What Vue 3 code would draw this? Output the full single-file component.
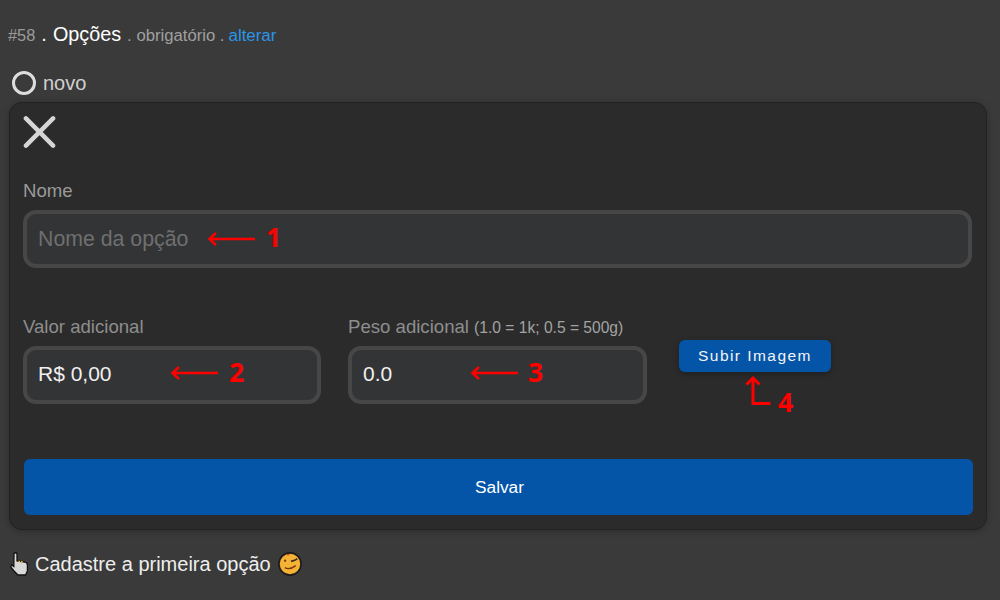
<script setup>
const arrowColor = '#f00'
</script>

<template>
  <div class="page">
    <div class="head">
      <span class="num">#58</span>
      <span class="dot-w">.</span>
      <span class="title">Opções</span>
      <span class="meta">. obrigatório .</span>
      <a class="link">alterar</a>
    </div>

    <div class="radio-row">
      <span class="radio"></span>
      <span class="radio-label">novo</span>
    </div>

    <div class="card">
      <svg class="close" width="33" height="34" viewBox="0 0 34 34">
        <path d="M3 3 L31 31 M31 3 L3 31" stroke="#d6d6d6" stroke-width="4.6" stroke-linecap="round" fill="none" />
      </svg>

      <label class="lbl lbl-nome">Nome</label>
      <div class="field field-full">
        <span class="placeholder">Nome da opção</span>
        <svg class="arrow a1" width="50" height="16" viewBox="0 0 50 16">
          <path d="M48 8 H3 M9 2 L2.5 8 L9 14" :stroke="arrowColor" stroke-width="2.5" fill="none" />
        </svg>
        <span class="mark m1">1</span>
      </div>

      <div class="row">
        <div class="col">
          <label class="lbl">Valor adicional</label>
          <div class="field field-value">
            <span class="value">R$ 0,00</span>
            <svg class="arrow a2" width="50" height="16" viewBox="0 0 50 16">
              <path d="M48 8 H3 M9 2 L2.5 8 L9 14" :stroke="arrowColor" stroke-width="2.5" fill="none" />
            </svg>
            <span class="mark m2">2</span>
          </div>
        </div>
        <div class="col col-wide">
          <label class="lbl">Peso adicional <small>(1.0 = 1k; 0.5 = 500g)</small></label>
          <div class="field field-value">
            <span class="value">0.0</span>
            <svg class="arrow a3" width="50" height="16" viewBox="0 0 50 16">
              <path d="M48 8 H3 M9 2 L2.5 8 L9 14" :stroke="arrowColor" stroke-width="2.5" fill="none" />
            </svg>
            <span class="mark m3">3</span>
          </div>
        </div>
        <div class="upload">
          <button class="btn-up">Subir Imagem</button>
          <svg class="arrow a4" width="28" height="32" viewBox="0 0 28 32">
            <path d="M8 29 V3 M1.5 9.5 L8 3 L14.5 9.5 M6.5 28.5 H25.5" :stroke="arrowColor" stroke-width="3" fill="none" />
          </svg>
          <span class="mark m4">4</span>
        </div>
      </div>

      <button class="btn-save">Salvar</button>
    </div>

    <div class="foot">
      <svg class="hand" width="18" height="24" viewBox="0 0 18 24">
        <path d="M4 1.5 Q5.5 0 7 1.5 V9 L15 10 Q17.4 11 17.4 13 V19 L15.5 23 H8 L4 19 L0.7 15 L1.6 13 L3.8 14.5 Z" fill="#d8d8d8" stroke="#111" stroke-width="1.3" />
        <path d="M8.5 8.8 h1.6 v1.4 h-1.6 z M11 9 h1.6 v1.4 h-1.6 z" fill="#f2b632" />
      </svg>
      <span>Cadastre a primeira opção</span>
      <svg class="wink" width="24" height="24" viewBox="0 0 23 23">
        <circle cx="11.5" cy="11.5" r="10.6" fill="#f5b335" stroke="#1d1d1d" stroke-width="1.6" />
        <circle cx="6.8" cy="8.4" r="1.1" fill="#7a3414" />
        <path d="M12.5 9 L16 8 L18.5 6.4" stroke="#3a2a20" stroke-width="1.6" fill="none" />
        <path d="M6.5 15 Q11 17.6 17 13" stroke="#7a3414" stroke-width="1.4" fill="none" />
        <path d="M8.5 2.6 h2.4" stroke="#d9432c" stroke-width="1.2" />
      </svg>
    </div>
  </div>
</template>

<style>
html, body { margin: 0; background: #3a3a3a; }
</style>

<style scoped>
.page {
  box-sizing: border-box;
  width: 1000px;
  height: 600px;
  overflow: hidden;
  background: #3a3a3a;
  font-family: "Liberation Sans", Arial, sans-serif;
  padding: 22px 13px 0 9px;
}
.head {
  display: flex;
  align-items: baseline;
  gap: 5px;
  height: 24px;
  line-height: 24px;
  color: #a0a0a0;
  font-size: 16.7px;
}
.num { color: #9a9a9a; margin-left: -1px; font-size: 16.4px; }
.dot-w { color: #fff; font-size: 20px; margin-left: 1px; }
.title { color: #fff; font-size: 19.8px; margin-left: 1px; }
.meta { margin-left: 1px; }
.link { color: #2b95e8; margin-left: -1px; font-size: 16.9px; }
.radio-row {
  display: flex;
  align-items: center;
  gap: 7px;
  margin: 24px 0 0 3px;
  height: 26px;
}
.radio {
  box-sizing: border-box;
  width: 24px;
  height: 24px;
  border: 3px solid #dedede;
  border-radius: 50%;
}
.radio-label { color: #d0d0d0; font-size: 20px; }
.card {
  box-sizing: border-box;
  width: 978px;
  height: 428px;
  margin-top: 6px;
  background: #2b2b2b;
  border: 1px solid #222;
  border-radius: 13px;
  padding: 12px 14px 0 13px;
  box-shadow: 0 1px 6px rgba(0,0,0,.25);
}
.close { display: block; margin-bottom: 31px; }
.lbl {
  display: block;
  color: #8e8e8e;
  font-size: 18.6px;
  line-height: 22px;
  margin-bottom: 8px;
}
.lbl-nome { color: #9a9a9a; }
.lbl small { font-size: 15.6px; color: #a3a3a3; line-height: 0; }
.field {
  position: relative;
  box-sizing: border-box;
  height: 58px;
  background: #333436;
  border: 4px solid #474747;
  border-radius: 13px;
  padding: 0 11px;
  display: flex;
  align-items: center;
  font-size: 21px;
}
.field-value { padding-bottom: 3px; }
.placeholder { color: #6f6f6f; font-size: 21.3px; }
.value { color: #f0f0f0; }
.row {
  display: flex;
  margin-top: 48px;
  gap: 27px;
}
.col { width: 298px; }
.col-wide { width: 299px; }
.upload {
  position: relative;
  padding: 24px 0 0 5px;
}
.btn-up {
  display: block;
  width: 152px;
  height: 32px;
  border: 0;
  border-radius: 6px;
  background: #0455a8;
  color: #f4f4f4;
  font: 15.5px "Liberation Sans", Arial, sans-serif;
  letter-spacing: 1.45px;
  box-shadow: 0 2px 6px rgba(0,0,0,.3);
}
.btn-save {
  display: block;
  width: 949px;
  height: 56px;
  margin: 55px 0 0 1px;
  padding: 0 6px 0 8px;
  border: 0;
  border-radius: 6px;
  background: #0455a8;
  color: #fff;
  font: 17.3px "Liberation Sans", Arial, sans-serif;
}
.arrow { position: absolute; }
.a1 { left: 180px; top: 17px; }
.a2 { left: 143px; top: 15px; }
.a3 { left: 118px; top: 15px; }
.a4 { left: 71px; top: 59px; }
.mark {
  position: absolute;
  color: #f00;
  font-family: "Open Sans", sans-serif;
  font-weight: 700;
  font-size: 26.5px;
  line-height: 30px;
}
.m1 { left: 239px; top: 8px; }
.m2 { left: 202px; top: 7px; }
.m3 { left: 176px; top: 7px; }
.m4 { left: 104px; top: 71px; }
.foot {
  display: flex;
  align-items: center;
  height: 26px;
  margin-top: 21px;
  color: #eee;
  font-size: 20px;
}
.hand { margin: 0 7px 0 1px; }
.wink { margin-left: 7px; }
</style>
